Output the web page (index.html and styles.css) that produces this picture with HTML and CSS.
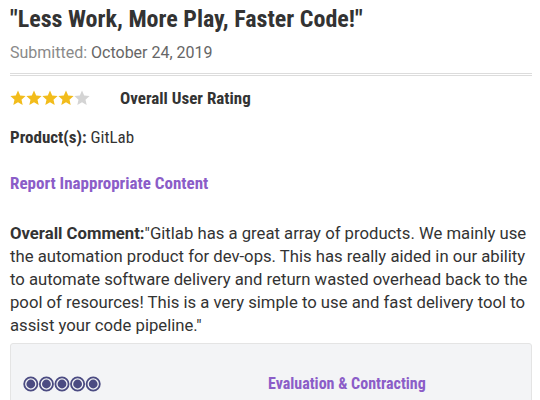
FILE: index.html
```html
<!DOCTYPE html>
<html>
<head>
<meta charset="utf-8">
<link rel="stylesheet" href="styles.css">
</head>
<body>
<div class="review">
  <h1 class="title">"Less Work, More Play, Faster Code!"</h1>
  <div class="submitted"><span class="sub-label">Submitted:</span> October 24, 2019</div>
  <div class="rating-row">
    <span class="stars">
      <svg width="80" height="16" viewBox="0 0 80 16">
        <defs>
          <polygon id="st" points="8,0.5 10.2,5.6 15.6,6.1 11.5,9.7 12.7,15 8,12.2 3.3,15 4.5,9.7 0.4,6.1 5.8,5.6"/>
        </defs>
        <use href="#st" x="0" fill="#f2bc1b"/>
        <use href="#st" x="16" fill="#f2bc1b"/>
        <use href="#st" x="32" fill="#f2bc1b"/>
        <use href="#st" x="48" fill="#f2bc1b"/>
        <use href="#st" x="64" fill="#d4d4d4"/>
      </svg>
    </span>
    <span class="rating-label">Overall User Rating</span>
  </div>
  <div class="product"><span class="cond-bold">Product(s):</span> <span class="cond">GitLab</span></div>
  <a class="report" href="#">Report Inappropriate Content</a>
  <p class="comment"><b>Overall Comment:</b>"Gitlab has a great array of products. We mainly use the automation product for dev-ops. This has really aided in our ability to automate software delivery and return wasted overhead back to the pool of resources! This is a very simple to use and fast delivery tool to assist your code pipeline."</p>
  <div class="scores">
    <div class="score-row">
      <span class="dots">
        <svg width="80" height="16" viewBox="0 0 80 16">
          <defs>
            <g id="dot">
              <circle cx="7.8" cy="8" r="6.6" fill="none" stroke="#4b4b82" stroke-width="1.8"/>
              <circle cx="7.8" cy="8" r="4.4" fill="#4b4b82"/>
            </g>
          </defs>
          <use href="#dot" x="0"/>
          <use href="#dot" x="15.6"/>
          <use href="#dot" x="31.2"/>
          <use href="#dot" x="46.8"/>
          <use href="#dot" x="62.4"/>
        </svg>
      </span>
      <span class="score-label">Evaluation &amp; Contracting</span>
    </div>
  </div>
</div>
</body>
</html>
```

FILE: styles.css
```css
html, body {
  margin: 0;
  padding: 0;
  background: #fff;
}
body {
  font-family: Roboto, "Liberation Sans", sans-serif;
  color: #333;
}
.review {
  padding: 4px 8px 0 10px;
}
.title {
  margin: 0;
  font-size: 24px;
  line-height: 30px;
  font-weight: 700;
  font-stretch: condensed;
  color: #333;
}
.submitted {
  margin-top: 9px;
  font-size: 16px;
  line-height: 20px;
  color: #666;
  padding-bottom: 10px;
  border-bottom: 3px double #dcdcdc;
}
.sub-label {
  color: #8a8a8a;
}
.rating-row {
  display: flex;
  align-items: center;
  margin-top: 12px;
  height: 20px;
}
.stars {
  display: flex;
  width: 110px;
}
.stars svg, .dots svg {
  display: block;
}
.rating-label {
  font-size: 17px;
  font-weight: 700;
  font-stretch: condensed;
  color: #333;
}
.product {
  margin-top: 19px;
  font-size: 17px;
  line-height: 20px;
  font-stretch: condensed;
}
.cond-bold {
  font-weight: 700;
}
.report {
  display: block;
  margin-top: 26px;
  font-size: 17px;
  line-height: 20px;
  font-weight: 700;
  font-stretch: condensed;
  color: #8b5dc8;
  text-decoration: none;
}
.comment {
  margin: 29px 0 0;
  font-size: 16.7px;
  line-height: 23px;
  color: #333;
}
.comment b {
  font-weight: 700;
}
.scores {
  margin-top: 6px;
  background: #f3f4f6;
  border: 1px solid #e4e4e4;
  border-radius: 3px;
  padding: 30px 12px 20px;
}
.score-row {
  display: grid;
  grid-template-columns: 245px 1fr;
  align-items: center;
}
.score-label {
  font-size: 16px;
  font-weight: 700;
  font-stretch: condensed;
  color: #8b5dc8;
}
```
